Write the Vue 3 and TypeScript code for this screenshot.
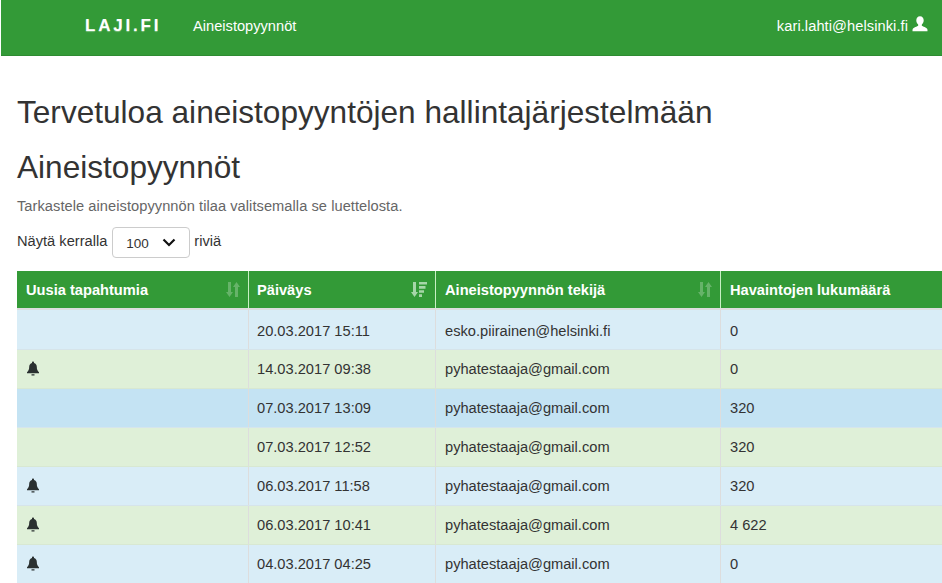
<script setup lang="ts">
const bell = 'M7 .4C6.400.4 6 .8 6 1.400v.5C4.200 2.400 3.200 3.900 3.200 5.800c0 2.900-.8 4.200-2.200 5.400v1h12v-1c-1.400-1.200-2.200-2.500-2.200-5.400 0-1.900-1-3.400-2.800-3.900v-.5C8 .8 7.600.4 7 .4zM5.500 13.200h3v1.200h-3z'
const rows = [
  { bell: false, date: '20.03.2017 15:11', who: 'esko.piirainen@helsinki.fi', n: '0', cls: 'info first' },
  { bell: true, date: '14.03.2017 09:38', who: 'pyhatestaaja@gmail.com', n: '0', cls: 'success' },
  { bell: false, date: '07.03.2017 13:09', who: 'pyhatestaaja@gmail.com', n: '320', cls: 'hover' },
  { bell: false, date: '07.03.2017 12:52', who: 'pyhatestaaja@gmail.com', n: '320', cls: 'success' },
  { bell: true, date: '06.03.2017 11:58', who: 'pyhatestaaja@gmail.com', n: '320', cls: 'info' },
  { bell: true, date: '06.03.2017 10:41', who: 'pyhatestaaja@gmail.com', n: '4 622', cls: 'success' },
  { bell: true, date: '04.03.2017 04:25', who: 'pyhatestaaja@gmail.com', n: '0', cls: 'info' },
]
</script>

<template>
  <div class="page">
    <nav class="nav">
      <div class="nav-left">
        <span class="logo">LAJI.FI</span>
        <span class="nav-link">Aineistopyynnöt</span>
      </div>
      <div class="user">
        <span>kari.lahti@helsinki.fi</span>
        <svg class="user-icon" viewBox="0 0 16 16" width="16" height="16" aria-hidden="true">
          <path fill="#fff" d="M8 .3C5.700.3 4.300 2 4.300 4.300c0 1.600.6 3.100 1.700 4 .3.300.3 1 .1 1.400-.6.700-4.800 1.700-5.400 3.300-.2.600-.2 1.400-.2 2.200h15c0-.8 0-1.600-.2-2.200-.6-1.600-4.800-2.600-5.400-3.300-.2-.4-.2-1.100.1-1.400 1.100-.9 1.700-2.400 1.700-4C11.700 2 10.300.3 8 .3z"/>
        </svg>
      </div>
    </nav>
    <main class="content">
      <h1>Tervetuloa aineistopyyntöjen hallintajärjestelmään</h1>
      <h2>Aineistopyynnöt</h2>
      <p class="lead">Tarkastele aineistopyynnön tilaa valitsemalla se luettelosta.</p>
      <div class="length">
        <span class="lbl">Näytä kerralla</span>
        <div class="select">
          <span>100</span>
          <svg viewBox="0 0 14 9" width="14" height="9" aria-hidden="true">
            <path d="M1.500 1.500 7 7l5.500-5.500" fill="none" stroke="#111" stroke-width="2.200"/>
          </svg>
        </div>
        <span class="lbl">riviä</span>
      </div>
      <div class="table">
        <div class="tr head">
          <div class="th c1">Uusia tapahtumia
            <svg class="sort dim" viewBox="0 0 14 15" width="14" height="15" aria-hidden="true"><path d="M2 0h3v10h2l-3.500 5L0 10h2zM9 15V5H7l3.500-5L14 5h-2v10z" fill="currentColor"/></svg>
          </div>
          <div class="th c2">Päiväys
            <svg class="sort" viewBox="0 0 16 15" width="16" height="15" aria-hidden="true"><path d="M2 0h3v10h2l-3.500 5L0 10h2zM8 0h8v2.600H8zM8 4.100h6.500v2.600H8zM8 8.200h5v2.600H8zM8 12.300h3v2.600H8z" fill="currentColor"/></svg>
          </div>
          <div class="th c3">Aineistopyynnön tekijä
            <svg class="sort dim" viewBox="0 0 14 15" width="14" height="15" aria-hidden="true"><path d="M2 0h3v10h2l-3.500 5L0 10h2zM9 15V5H7l3.500-5L14 5h-2v10z" fill="currentColor"/></svg>
          </div>
          <div class="th c4">Havaintojen lukumäärä</div>
        </div>
        <div v-for="(r, i) in rows" :key="i" class="tr" :class="r.cls">
          <div class="td c1">
            <svg v-if="r.bell" class="bell" viewBox="0 0 14 15" width="14" height="15" aria-hidden="true"><path :d="bell" fill="#2a3030"/></svg>
          </div>
          <div class="td c2">{{ r.date }}</div>
          <div class="td c3">{{ r.who }}</div>
          <div class="td c4">{{ r.n }}</div>
        </div>
      </div>
    </main>
  </div>
</template>

<style>
html, body { margin: 0; overflow: hidden; background: #fff; }
</style>

<style scoped>
.page { width: 942px; height: 583px; overflow: hidden; font-family: "Liberation Sans", Arial, sans-serif; font-size: 14.65px; color: #333; }
.nav { height: 51px; padding-bottom: 4px; background: #339a37; border-bottom: 1px solid #2e8b32; margin-left: 1px; display: flex; align-items: center; justify-content: space-between; color: #fff; }
.nav-left { display: flex; align-items: center; padding-left: 84px; }
.logo { font-weight: 700; font-size: 17px; letter-spacing: 2.800px; width: 108px; text-shadow: 0 1px 1px rgba(255,255,255,.35); }
.user { display: flex; align-items: center; gap: 4px; padding-right: 14px; letter-spacing: .07px; }
.user-icon { display: block; margin-top: -3px; }
.content { padding: 0 0 0 17px; }
h1 { margin: 40px 0 0; font-size: 31.6px; font-weight: 400; line-height: 33px; color: #333; white-space: nowrap; }
h2 { margin: 22px 0 0; font-size: 31.6px; font-weight: 400; line-height: 33px; color: #333; }
.lead { margin: 12px 0 0; line-height: 20px; color: #666; letter-spacing: .05px; }
.length { display: flex; align-items: center; margin-top: 11px; height: 32px; }
.lbl { padding-bottom: 4px; }
.select { width: 76px; height: 29px; margin: 0 4px 1px 5px; border: 1px solid #ccc; border-radius: 4px; display: flex; align-items: center; justify-content: space-between; font-size: 13.5px; }
.select span { margin-left: 13px; margin-top: 1px; }
.select svg { margin-right: 13px; }
.table { margin-top: 12px; width: 960px; }
.tr { display: flex; height: 39px; box-sizing: border-box; border-bottom: 1px solid #dde; }
.first { height: 40px; }
.first .td { padding-top: 2px; }
.head { height: 39px; background: #339a37; color: #fff; font-weight: 700; border-bottom: 2px solid #dddddd; }
.th, .td { box-sizing: border-box; padding: 0 9px; display: flex; align-items: center; }
.th { position: relative; justify-content: space-between; border-right: 1px solid #c8f0c4; }
.td { border-right: 1px solid #ddd; color: #333; }
.th.c2, .td.c2 { padding-left: 8px; }
.c1 { width: 232px; }
.c2 { width: 187px; }
.c3 { width: 285px; }
.c4 { width: 256px; border-right: 0; }
.bell { margin-top: -2px; }
.sort { color: #a6d6a8; flex: none; margin-right: -1px; }
.dim { color: #66b369; }
.info { background: #d9edf7; border-bottom-color: #d6e4ea; }
.success { background: #dff0d8; border-bottom-color: #d8e8d2; }
.hover { background: #c4e3f3; border-bottom-color: #d5e5ec; }
</style>
